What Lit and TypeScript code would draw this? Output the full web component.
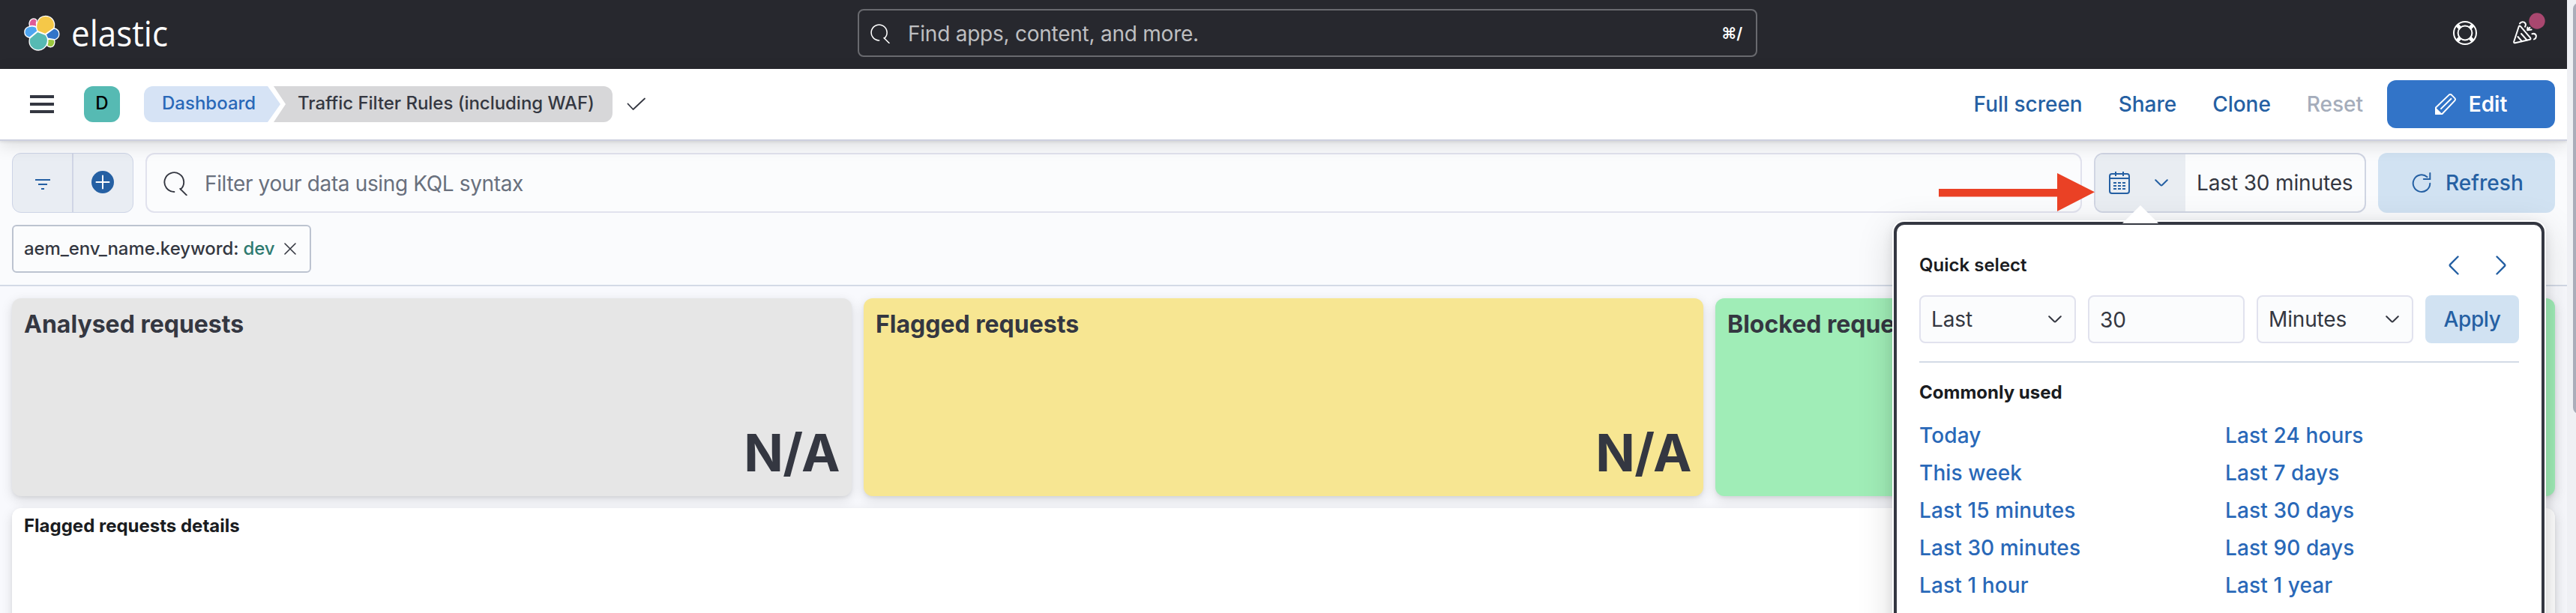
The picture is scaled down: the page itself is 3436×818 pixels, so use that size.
import { LitElement, html, css, svg } from "lit";
import { customElement } from "lit/decorators.js";

const searchIcon = svg`<path d="M7.2 13.5A6.45 6.45 0 1 1 11.4 11.9M11.1 11.4L15.4 15.7" fill="none" stroke="currentColor" stroke-width=".95" stroke-linecap="round"/>`;
const chevron = html`<svg class="chev" viewBox="0 0 18 10"><path d="M1.2 1.2L7.8 7.8Q9 8.9 10.2 7.8L16.8 1.2" fill="none" stroke="currentColor" stroke-width="2" stroke-linecap="round"/></svg>`;

const panels = [
  { title: "Analysed requests", tone: "grey" },
  { title: "Flagged requests", tone: "yellow" },
  { title: "Blocked requests", tone: "green" },
];

const ranges = [
  "Today", "Last 24 hours",
  "This week", "Last 7 days",
  "Last 15 minutes", "Last 30 days",
  "Last 30 minutes", "Last 90 days",
  "Last 1 hour", "Last 1 year",
];

@customElement("elastic-header")
class ElasticHeader extends LitElement {
  static styles = css`
    :host { display: grid; grid-template-columns: 1112px 1200px 1fr; align-items: center; box-sizing: border-box; height: 92px; padding: 0 40px 4px 32px; background: #27282e; color: #fff; }
    .brand { display: flex; align-items: center; gap: 16px; }
    .mark { width: 48px; height: 48px; display: block; }
    .word { width: 128px; height: 48px; display: block; overflow: visible; }
    .word text { font: 400 48px "Open Sans", sans-serif; fill: #fff; }
    .search { display: flex; align-items: center; box-sizing: border-box; height: 64px; padding: 1px 18px 0 15px; border: 2px solid #696a6f; border-radius: 8px; font-size: 28px; letter-spacing: -.24px; color: #bebfc1; }
    .search svg { width: 26px; height: 26px; color: #fff; margin-right: 24px; }
    .search span { flex: 1; }
    .search b { font: 600 21px Inter, "DejaVu Sans", sans-serif; color: #fff; }
    .icons { display: flex; justify-content: flex-end; gap: 48px; }
    .icons svg { width: 32px; height: 32px; display: block; overflow: visible; }
  `;
  render() {
    return html`
      <div class="brand">
        <svg class="mark" viewBox="96 59 145 146" stroke="#fff" stroke-width="4" stroke-linejoin="round">
          <path fill="#df5b97" d="M118 104C113 90 121 74 135 74c5 0 9 2 12 6-2 8-2 19 0 28-8-5-18-6-29-4z"/>
          <path fill="#9ac73e" d="M192 157l26 2c6 12-1 30-15 30-5 0-10-2-14-6 3-8 4-18 3-26z"/>
          <path fill="#4ea5f0" d="M119 106c9-3 19-1 28 4l4 14-33 27c-12-3-20-11-20-22 0-12 8-21 21-23z"/>
          <path fill="#3274c8" d="M218 113c12 3 20 12 20 23 0 10-6 19-16 23l-31-5-7-16z"/>
          <path fill="#f5c848" d="M150 124c-5-12-5-24-2-32 5-17 18-29 35-29 20 0 36 16 36 36 0 5-1 9-2 13l-35 25z"/>
          <path fill="#56bab3" d="M151 127l32 12c9 10 10 25 6 37-5 15-19 26-35 26-21 0-37-16-37-36 0-5 1-9 2-13z"/>
        </svg>
        <svg class="word" viewBox="0 0 128 48"><text x="-1" y="42" textLength="129" lengthAdjust="spacingAndGlyphs">elastic</text></svg>
      </div>
      <div class="search"><svg viewBox="0 0 16 16">${searchIcon}</svg><span>Find apps, content, and more.</span><b>⌘/</b></div>
      <div class="icons">
        <svg viewBox="0 0 32 32" fill="none" stroke="#fff" stroke-width="2">
          <circle cx="16" cy="16" r="15"/><circle cx="16" cy="16" r="9.4"/>
          <path stroke-width="5" d="M5.8 5.8l3.6 3.6M22.6 22.6l3.6 3.6M26.2 5.8l-3.6 3.6M9.4 22.6l-3.6 3.6"/>
        </svg>
        <svg viewBox="0 0 32 32" fill="none" stroke="#fff" stroke-width="2" stroke-linecap="round" stroke-linejoin="round">
          <path d="M7.8 7.2L1.2 27.5Q.8 29.8 3 29.2L22.5 24.8Q24.2 24 23 22.4L10 7.2Q8.6 5.8 7.8 7.2z"/>
          <path d="M6.5 21L11.8 27.2M11 17L18.6 25.6M9 3.4Q11 .4 14.8 1.6Q18.4 4 16 7.6M19.2 12.2L19.4 8.4M19.2 12.2L24.6 11.6M19.2 12.2L22.4 8.8M25.4 17.2Q29.4 16 30.8 19.4Q31.2 23.4 28 24.4"/>
          <circle cx="32" cy="0" r="10.7" fill="#a9476f" stroke="none"/>
        </svg>
      </div>`;
  }
}

@customElement("nav-bar")
class NavBar extends LitElement {
  static styles = css`
    :host { display: flex; align-items: center; box-sizing: border-box; height: 96px; padding: 0 16px 0 40px; background: #fff; border-bottom: 2px solid #cdd0df; box-shadow: 0 2px 3px rgba(0,0,0,.07), 0 6px 22px rgba(0,0,0,.12); position: relative; font-weight: 500; }
    .menu { width: 32px; height: 24px; }
    .avatar { width: 48px; height: 48px; margin: 0 32px 0 40px; border-radius: 12px; background: #56bab3; color: #000; font-size: 24px; line-height: 46px; text-align: center; }
    .crumb { box-sizing: border-box; height: 48px; padding: 0 24px; font-size: 24px; line-height: 46px; }
    .first { width: 182px; color: #2968b8; background: #d6e3f5; border-radius: 12px 0 0 12px; clip-path: polygon(0 0, 165px 0, 100% 50%, 165px 100%, 0 100%); }
    .last { width: 452px; margin-left: -9px; padding: 0 0 0 32px; letter-spacing: -.04px; color: #343741; background: #d7d7d9; border-radius: 0 12px 12px 0; clip-path: polygon(0 0, 100% 0, 100% 100%, 0 100%, 16px 50%); }
    .check { width: 26px; height: 18px; margin-left: 19px; }
    .links { flex: 1; display: flex; justify-content: flex-end; gap: 48px; margin-right: 32px; font-size: 28px; color: #2560a3; letter-spacing: -.02px; }
    .off { color: #a5adbb; }
    .edit { display: flex; align-items: center; justify-content: center; gap: 17px; width: 224px; height: 64px; border-radius: 12px; background: #3274c8; color: #fff; font-size: 28px; font-weight: 600; }
    .edit svg { width: 28px; height: 28px; }
  `;
  render() {
    return html`
      <svg class="menu" viewBox="0 0 32 24" fill="#343741"><path d="M0 0h32v4H0zM0 10h32v4H0zM0 20h32v4H0z"/></svg>
      <div class="avatar">D</div>
      <div class="crumb first">Dashboard</div>
      <div class="crumb last">Traffic Filter Rules (including WAF)</div>
      <svg class="check" viewBox="0 0 26 18"><path d="M1.5 8.5L8.5 16L24 1.5" fill="none" stroke="#343741" stroke-width="1.8" stroke-linecap="round" stroke-linejoin="round"/></svg>
      <div class="links"><span>Full screen</span><span>Share</span><span>Clone</span><span class="off">Reset</span></div>
      <div class="edit">
        <svg viewBox="0 0 28 28" fill="none" stroke="#fff" stroke-width="1.9" stroke-linejoin="round"><path d="M1 18.5L18.6 1.6Q20.4.2 22.2 1.8L26.2 5.8Q27.8 7.6 26.2 9.4L9.5 27H1zM7.4 20.6L22 6.2"/><path d="M1 20L8 27H1z" fill="#fff"/></svg>
        Edit
      </div>`;
  }
}

@customElement("query-bar")
class QueryBar extends LitElement {
  static styles = css`
    :host { display: block; box-sizing: border-box; height: 194px; padding: 16px 16px 0; border-bottom: 2px solid #d3dae6; background: #fafbfd; }
    .row { display: flex; gap: 16px; height: 80px; }
    .row > div { box-sizing: border-box; border-radius: 12px; display: flex; align-items: center; font-size: 28px; }
    .group { width: 162px; background: #e9edf3; border: 1px solid #cdd4e6; overflow: hidden; }
    .group span { flex: 1; height: 100%; display: flex; align-items: center; justify-content: center; box-sizing: border-box; }
    .group span + span { border-left: 2px solid #d0d5e5; }
    .filter { width: 20px; height: 14px; margin: 3px 0 0 0; }
    .plus { width: 30px; height: 30px; margin: -2px 2px 0 0; }
    .kql { flex: 1; border: 2px solid #e1e2ee; background: #fbfcfd; color: #69707d; padding: 2px 20px 0 22px; letter-spacing: -.36px; }
    .kql svg { width: 32px; height: 32px; margin-right: 23px; }
    .date { width: 363px; border: 2px solid #d0d5e3; background: #fbfcfd; color: #343741; overflow: hidden; letter-spacing: -.14px; }
    .quick { display: flex; align-items: center; gap: 33px; height: 100%; width: 120px; box-sizing: border-box; padding-left: 18px; background: #e9edf2; color: #2560a3; margin-right: 15px; }
    .cal { width: 28px; height: 30px; }
    .chev { width: 18px; height: 10px; }
    .refresh { width: 236px; background: #d1e2f2; color: #2560a3; font-weight: 500; padding-left: 45px; gap: 19px; letter-spacing: .05px; }
    .refresh svg { width: 26px; height: 28px; }
    .tag { display: inline-flex; align-items: center; box-sizing: border-box; width: 399px; height: 64px; margin-top: 16px; padding: 0 18px 2px 14px; border: 2px solid #bcc3d0; border-radius: 6px; font-size: 24px; font-weight: 500; color: #343741; letter-spacing: -.08px; background: #fbfcfd; }
    .tag em { font-style: normal; color: #2f7a70; margin-left: 6px; }
    .tag svg { width: 16px; height: 16px; margin: 2px 0 0 auto; }
  `;
  render() {
    return html`
      <div class="row">
        <div class="group">
          <span><svg class="filter" viewBox="0 0 20 14" fill="#2560a3"><path d="M0 0h20v2H0zM4 6h12v2H4zM8 12h4v2H8z"/></svg></span>
          <span><svg class="plus" viewBox="0 0 30 30"><circle cx="15" cy="15" r="15" fill="#2560a3"/><path d="M15 6.5v17M6.5 15h17" stroke="#fff" stroke-width="2" stroke-linecap="round"/></svg></span>
        </div>
        <div class="kql"><svg viewBox="0 0 16 16" color="#343741">${searchIcon}</svg>Filter your data using KQL syntax</div>
        <div class="date">
          <div class="quick">
            <svg class="cal" viewBox="0 0 28 30" fill="none" stroke="currentColor" stroke-width="2"><rect x="1" y="3" width="26" height="26" rx="3"/><path d="M1 9h26M9 0v6M19 0v6"/><path d="M6 15h16M6 19h16M6 23h16" stroke-dasharray="4 2"/></svg>
            ${chevron}
          </div>
          <span>Last 30 minutes</span>
        </div>
        <div class="refresh">
          <svg viewBox="0 0 26 28" fill="none" stroke="currentColor" stroke-width="2" stroke-linecap="round"><path d="M20.5 6.2A11.3 11.3 0 1 0 24.3 14.8M15.8 9H24.3V1"/></svg>
          Refresh
        </div>
      </div>
      <div class="tag"><span>aem_env_name.keyword:</span><em>dev</em><svg viewBox="0 0 16 16"><path d="M1 1l14 14M15 1L1 15" stroke="#343741" stroke-width="1.6" stroke-linecap="round"/></svg></div>`;
  }
}

@customElement("quick-select")
class QuickSelect extends LitElement {
  static styles = css`
    :host { display: block; box-sizing: border-box; width: 868px; height: 620px; padding: 30px; border: 4px solid #343741; border-bottom: 0; border-radius: 14px 14px 0 0; background: #fff; box-shadow: 0 0 0 2px #fff, 0 4px 16px rgba(0,0,0,.12), 0 12px 48px 4px rgba(0,0,0,.13); }
    .tip { position: absolute; left: 301px; top: -26px; width: 48px; height: 24px; background: #fff; clip-path: polygon(50% 0, 100% 100%, 0 100%); }
    .head { display: flex; align-items: center; height: 48px; font-size: 24px; font-weight: 600; color: #1a1c21; }
    .head span { flex: 1; padding-bottom: 1px; }
    .head svg { width: 14px; height: 26px; margin-right: 17px; }
    .head svg:nth-of-type(1) { margin-right: 49px; }
    .form { display: grid; grid-template-columns: repeat(3, 1fr) 125px; gap: 16px; height: 64px; margin-top: 16px; font-size: 28px; color: #343741; letter-spacing: -.15px; }
    .form div { box-sizing: border-box; display: flex; align-items: center; justify-content: space-between; padding: 0 17px 0 14px; border: 2px solid #e1e2ee; border-radius: 8px; background: #fbfcfd; }
    .form .num { padding-top: 2px; }
    .form .apply { justify-content: center; border: 0; padding: 0; background: #d1e2f2; color: #2560a3; font-weight: 500; letter-spacing: -.4px; }
    .chev { width: 18px; height: 10px; }
    .rule { height: 2px; margin: 24px 0 22px; background: #d3dae6; }
    .sub { font-size: 24px; font-weight: 700; line-height: 36px; color: #1a1c21; }
    .list { display: grid; grid-template-columns: 1fr 1fr; column-gap: 16px; grid-auto-rows: 50px; margin-top: 14px; font-size: 28px; font-weight: 500; line-height: 50px; color: #2968b8; letter-spacing: .12px; }
  `;
  render() {
    return html`
      <div class="tip"></div>
      <div class="head"><span>Quick select</span>
        <svg viewBox="0 0 14 26"><path d="M12.5 1.5L2.2 11.8Q1.2 13 2.2 14.2L12.5 24.5" fill="none" stroke="#2560a3" stroke-width="2.4" stroke-linecap="round"/></svg>
        <svg viewBox="0 0 14 26"><path d="M1.5 1.5L11.8 11.8Q12.8 13 11.8 14.2L1.5 24.5" fill="none" stroke="#2560a3" stroke-width="2.4" stroke-linecap="round"/></svg>
      </div>
      <div class="form">
        <div>Last${chevron}</div><div class="num">30</div><div>Minutes${chevron}</div><div class="apply">Apply</div>
      </div>
      <div class="rule"></div>
      <div class="sub">Commonly used</div>
      <div class="list">${ranges.map((r) => html`<span>${r}</span>`)}</div>`;
  }
}

@customElement("app-root")
class AppRoot extends LitElement {
  static styles = css`
    :host { display: flex; position: relative; height: 818px; overflow: hidden; font-family: Inter, sans-serif; background: #f8f9fd; }
    .main { flex: 1; height: 818px; overflow: hidden; position: relative; }
    .track { width: 12px; box-sizing: border-box; padding: 4px 0 0 8px; background: #eff0f4; overflow: hidden; }
    .thumb { width: 16px; height: 548px; border-radius: 8px; background: #abadba; }
    nav-bar { z-index: 1; }
    .board { display: grid; grid-template-columns: repeat(3, 1fr); grid-template-rows: 264px 400px; gap: 16px; padding: 16px; }
    .panel { border-radius: 12px; box-shadow: 0 2px 4px rgba(0,0,0,.06), 0 5px 16px rgba(0,0,0,.13); box-sizing: border-box; color: #343741; font-weight: 700; padding: 15px 16px 20px; display: flex; flex-direction: column; justify-content: space-between; }
    .title { font-size: 32px; line-height: 40px; }
    .value { font-size: 69px; line-height: 76px; text-align: right; letter-spacing: -.5px; }
    .grey { background: #e6e6e6; }
    .yellow { background: #f7e692; }
    .green { background: #a0edb7; }
    .wide { grid-column: 1 / -1; background: #fff; color: #1a1c21; font-size: 24px; line-height: 24px; padding-top: 12px; justify-content: flex-start; }
    quick-select { position: absolute; left: 2526px; top: 296px; z-index: 2; }
    .pointer { position: absolute; left: 2586px; top: 231px; width: 208px; height: 51px; z-index: 3; }
  `;
  render() {
    return html`
      <div class="main">
        <elastic-header></elastic-header>
        <nav-bar></nav-bar>
        <query-bar></query-bar>
        <div class="board">
          ${panels.map((p) => html`<div class="panel ${p.tone}"><div class="title">${p.title}</div><div class="value">N/A</div></div>`)}
          <div class="panel wide">Flagged requests details</div>
        </div>
        <quick-select></quick-select>
        <svg class="pointer" viewBox="0 0 208 51"><path fill="#ea4125" d="M0 21h158V0l50 25.3L158 51V31.500H0z"/></svg>
      </div>
      <div class="track"><div class="thumb"></div></div>`;
  }
}
